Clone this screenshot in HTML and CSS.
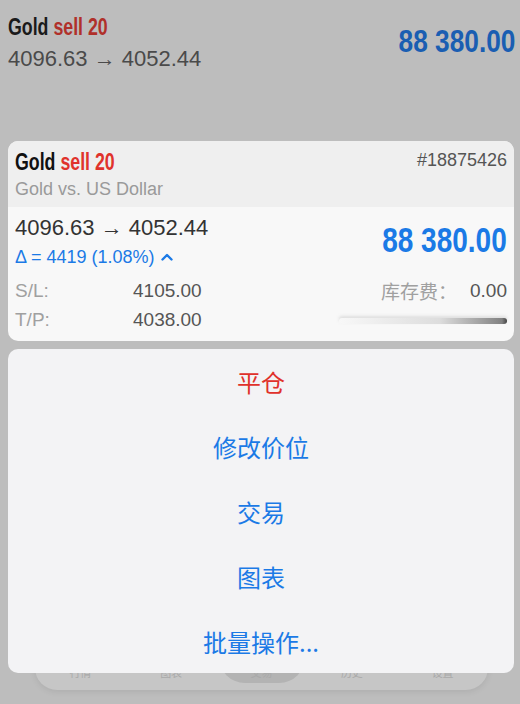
FILE: index.html
```html
<!DOCTYPE html>
<html lang="zh">
<head>
  <meta charset="UTF-8">
  <meta name="viewport" content="width=device-width, initial-scale=1.0">
  <title>Gold sell 20</title>
  <link rel="stylesheet" href="styles.css">
</head>
<body>

  <!-- Riga della posizione, sotto lo strato scuro -->
  <div class="summary">
    <div class="summary-left">
      <div class="title"><span class="sym">Gold</span> <span class="side">sell 20</span></div>
      <div class="prices">4096.63 &rarr; 4052.44</div>
    </div>
    <div class="profit">88 380.00</div>
  </div>

  <!-- Barra in basso, quasi coperta dal menu -->
  <div class="tabbar">
    <div class="tab">行情</div>
    <div class="tab">图表</div>
    <div class="tab active">交易</div>
    <div class="tab">历史</div>
    <div class="tab">设置</div>
  </div>

  <div class="overlay">
    <div class="card">
      <div class="card-head">
        <div>
          <div class="title"><span class="sym">Gold</span> <span class="side">sell 20</span></div>
          <div class="desc">Gold vs. US Dollar</div>
        </div>
        <div class="ticket">#18875426</div>
      </div>
      <div class="card-body">
        <div class="row-main">
          <div>
            <div class="prices">4096.63 &rarr; 4052.44</div>
            <div class="delta">&Delta; = 4419 (1.08%) <svg width="12" height="8" viewBox="0 0 12 8"><path d="M1.5 6.5 L6 2 L10.5 6.5" fill="none" stroke="#1b7ae6" stroke-width="2.4" stroke-linecap="round" stroke-linejoin="round"/></svg></div>
          </div>
          <div class="profit">88 380.00</div>
        </div>
        <div class="row-info first">
          <span class="lbl">S/L:</span><span class="val">4105.00</span>
          <span class="lbl right">库存费：</span><span class="val">0.00</span>
        </div>
        <div class="row-info">
          <span class="lbl">T/P:</span><span class="val">4038.00</span>
          <span class="fade"></span>
        </div>
      </div>
    </div>

    <div class="sheet">
      <div class="action danger">平仓</div>
      <div class="action">修改价位</div>
      <div class="action">交易</div>
      <div class="action">图表</div>
      <div class="action">批量操作...</div>
    </div>
  </div>

</body>
</html>
```

FILE: styles.css
```css
body {
  margin: 0; width: 520px; height: 704px; overflow: hidden;
  background: #bdbdbd; position: relative;
  font-family: "Liberation Sans", Arial, "Noto Sans CJK SC", sans-serif;
}
/* caratteri stretti: nessun font condensed installato, si stringe in orizzontale */
.title {
  display: inline-block; transform: scaleX(0.74); transform-origin: left center;
  font-weight: bold; font-size: 24px; line-height: 26px; white-space: nowrap;
}
.sym { color: #111; }
.side { color: #e0332c; }
.prices { font-size: 22px; line-height: 26px; color: #333; }
.profit {
  display: inline-block; transform-origin: right center; transform: scaleX(0.8);
  font-weight: bold; color: #1b7ae6; white-space: nowrap;
}

/* parte sotto lo strato */
.summary {
  display: flex; justify-content: space-between; align-items: flex-start;
  padding: 14px 5px 0 8px;
}
.summary .sym { color: #1a1a1a; }
.summary .side { color: #b0302a; }
.summary .prices { color: #4a4a4a; margin-top: 6px; }
.summary .profit { font-size: 32px; line-height: 36px; color: #1a5eb2; margin-top: 9px; transform: scaleX(0.82); }

.tabbar {
  position: absolute; left: 35px; right: 32px; top: 590px; height: 100px;
  background: #c6c6c6; border-radius: 0 0 22px 22px;
  box-shadow: 0 2px 6px rgba(0,0,0,0.08);
  display: flex; align-items: flex-end;
  padding: 0 0 10px; box-sizing: border-box;
}
.tab { flex: 1; font-size: 11px; color: #a9a9a9; text-align: center; }
.tab.active {
  flex: 0 0 86px; margin: 0 2px -3px; background: #b3b3b3;
  border-radius: 0 0 26px 26px; padding: 40px 0 3px;
}

/* menu sopra */
.overlay {
  position: absolute; left: 8px; right: 6px; top: 141px;
  display: flex; flex-direction: column; gap: 8px;
}
.card { border-radius: 10px; overflow: hidden; background: #f8f8f8; height: 200px; }
.card-head {
  background: #efefef; display: flex; justify-content: space-between;
  padding: 8px 7px 0 7px; height: 66px; box-sizing: border-box;
}
.desc { font-size: 18px; color: #9a9a9a; margin-top: 4px; }
.ticket { font-size: 18px; color: #555; margin-top: 1px; }
.card-body { padding: 8px 7px 6px 7px; }
.row-main { display: flex; justify-content: space-between; align-items: flex-start; }
.card .profit { font-size: 35px; line-height: 40px; margin-top: 5px; }
.delta { font-size: 18px; color: #1b7ae6; margin-top: 5px; line-height: 22px; }
.delta svg { vertical-align: 2px; margin-left: 1px; }
.row-info { display: flex; align-items: center; height: 29px; font-size: 19px; }
.row-info.first { margin-top: 8px; }
.lbl { color: #a0a0a0; width: 118px; }
.val { color: #555; }
.lbl.right { margin-left: auto; width: auto; margin-right: 13px; }
.fade {
  margin-left: auto; width: 168px; height: 6px; margin-top: 3px;
  background: linear-gradient(to right, rgba(150,150,150,0), rgba(140,140,140,0.25) 60%, rgba(90,90,90,0.75) 97%, #444 100%);
  border-radius: 3px; box-shadow: 0 -2px 3px rgba(200,200,200,0.5);
}

.sheet {
  background: #f3f3f5; border-radius: 10px;
  display: flex; flex-direction: column;
  height: 324px; box-sizing: border-box; padding-top: 0;
}
.action {
  height: 65px; flex: 0 0 65px; display: flex; align-items: center; justify-content: center;
  font-size: 24px; color: #1b7ae6;
  font-family: "Noto Sans CJK SC", sans-serif;
}
.action.danger { color: #e0312b; }
```
